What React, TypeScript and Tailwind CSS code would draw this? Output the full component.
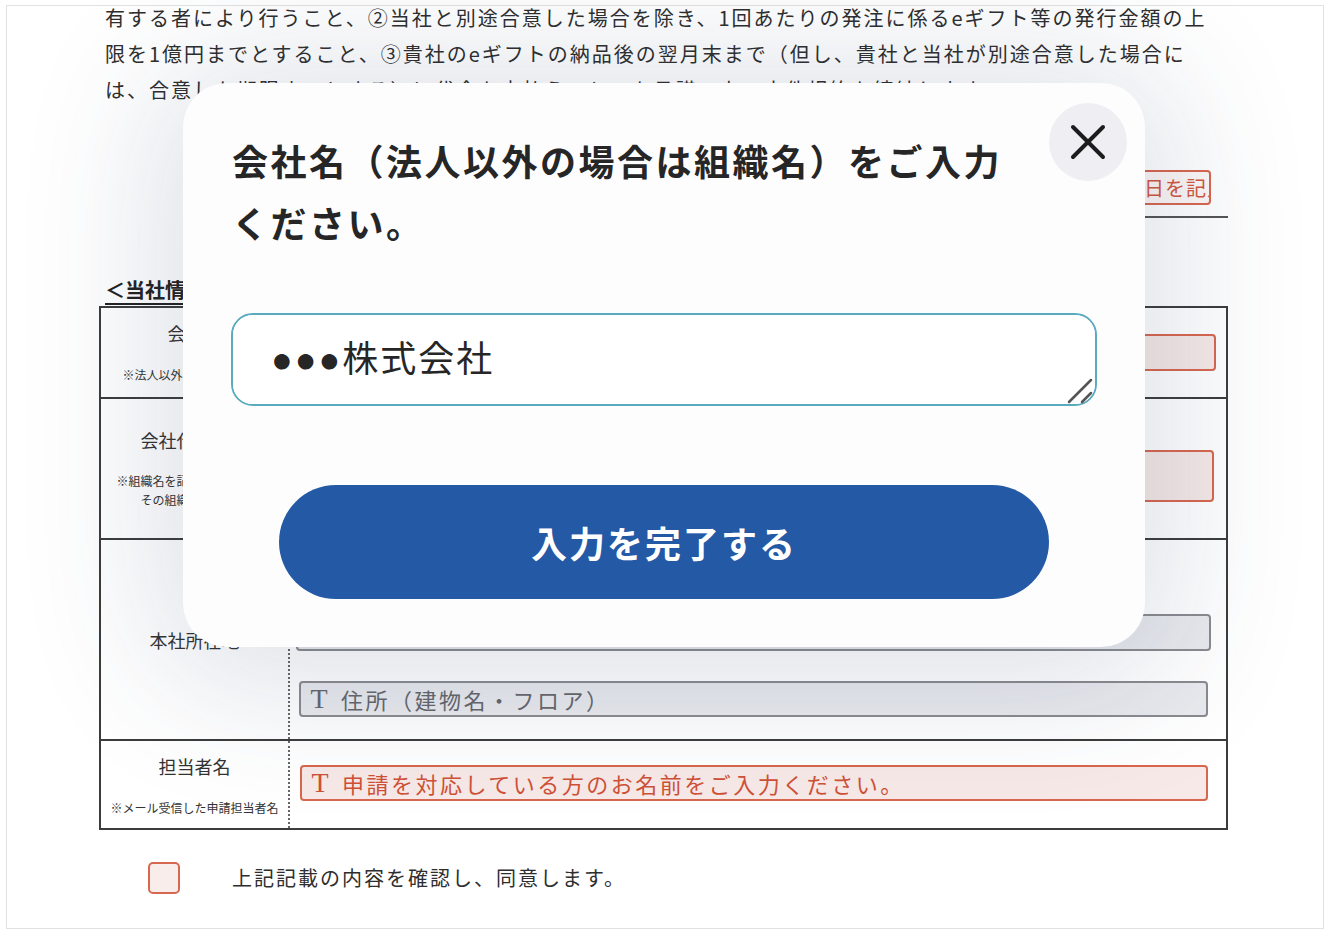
import { useState } from "react";

const jp = "font-['Noto_Sans_CJK_JP',sans-serif]";

function FieldBox({
  tone,
  text,
  className,
}: {
  tone: "red" | "gray";
  text?: string;
  className: string;
}) {
  const red = tone === "red";
  return (
    <div
      className={`flex items-center rounded-[4px] border-2 pl-[4px] ${
        red
          ? "border-[#d8674f] bg-[#f6e9e7] text-[#cf5136]"
          : "border-[#8a8b8f] bg-[#e9eaee] text-[#66676b]"
      } ${className}`}
    >
      {text && (
        <>
          <span className="w-[28px] text-center font-['Liberation_Serif',serif] text-[28px] leading-none">
            T
          </span>
          <span className="ml-[8px] text-[22px] leading-none tracking-[2.5px] whitespace-nowrap">
            {text}
          </span>
        </>
      )}
    </div>
  );
}

export default function App() {
  const [name, setName] = useState("●●●株式会社");

  return (
    <div className={`relative h-[948px] w-[1338px] overflow-hidden bg-white ${jp}`}>
      <div className="ml-[6px] mt-[5px] h-[924px] w-[1318px] border border-[#e2e2e2] pl-[92px] pr-[95px]">
        <div className="-mt-[6px] pl-[6px] text-[20px] leading-[36px] tracking-[2px] text-[#2e2e2e] whitespace-nowrap">
          <div>有する者により行うこと、②当社と別途合意した場合を除き、1回あたりの発注に係るeギフト等の発行金額の上</div>
          <div>限を1億円までとすること、③貴社のeギフトの納品後の翌月末まで（但し、貴社と当社が別途合意した場合に</div>
          <div>は、合意した期限までとする）に代金を支払うこと、を承諾の上、本件規約を締結します。</div>
        </div>

        <div className="mt-[62px] flex justify-end">
          <div className="flex w-[520px] items-center justify-end border-b-2 border-[#555] pb-[11px] pr-[17px]">
            <div className="h-[35px] w-[108px] overflow-hidden rounded-[4px] border-2 border-[#d8674f] bg-[#fdf7f6] pl-[18px] text-[20px] leading-[31px] tracking-[1px] text-[#d2573d] whitespace-nowrap">
              月日を記入
            </div>
          </div>
        </div>

        <div className="mt-[58px] pl-[6px] text-[20px] leading-[28px] font-bold text-[#222]">
          <span className="underline decoration-2 underline-offset-[5px]">＜当社情報＞</span>
        </div>

        <div className="mt-[2px] border-2 border-[#3c3c3c] text-[#333]">
          <div className="grid h-[89px] grid-cols-[189px_1fr]">
            <div className="flex flex-col items-center border-r-2 border-dotted border-[#666] pt-[14px]">
              <span className="text-[18px] leading-[22px]">会社名</span>
              <span className="mt-[23px] text-[12px] leading-[16px]">※法人以外の場合は組織名</span>
            </div>
            <div className="flex items-center pl-[8px] pr-[10px]">
              <FieldBox tone="red" text="会社名をご入力ください。" className="h-[37px] w-full" />
            </div>
          </div>

          <div className="grid h-[141px] grid-cols-[189px_1fr] border-t-2 border-[#3c3c3c]">
            <div className="flex flex-col items-center border-r-2 border-dotted border-[#666] pt-[30px] text-center">
              <span className="text-[18px] leading-[22px]">会社代表者名</span>
              <span className="mt-[20px] text-[12px] leading-[19px]">
                ※組織名を記入した場合は、
                <br />
                その組織の代表者名
              </span>
            </div>
            <div className="pl-[8px] pr-[12px] pt-[51px]">
              <FieldBox tone="red" text="代表者名をご入力ください。" className="h-[52px] w-full" />
            </div>
          </div>

          <div className="grid h-[201px] grid-cols-[189px_1fr] border-t-2 border-[#3c3c3c]">
            <div className="flex items-center justify-center border-r-2 border-dotted border-[#666]">
              <span className="text-[18px] leading-[22px]">本社所在地</span>
            </div>
            <div className="flex flex-col pl-[6px] pr-[15px] pt-[20px]">
              <FieldBox tone="gray" text="郵便番号" className="h-[36px] w-[240px]" />
              <FieldBox tone="gray" text="住所（都道府県・市区町村・番地）" className="mt-[18px] h-[37px] w-full" />
              <FieldBox tone="gray" text="住所（建物名・フロア）" className="ml-[3px] mt-[30px] h-[36px] w-[909px]" />
            </div>
          </div>

          <div className="grid h-[89px] grid-cols-[189px_1fr] border-t-2 border-[#3c3c3c]">
            <div className="flex flex-col items-center border-r-2 border-dotted border-[#666] pt-[14px]">
              <span className="text-[18px] leading-[22px]">担当者名</span>
              <span className="mt-[23px] text-[12px] leading-[16px] whitespace-nowrap">※メール受信した申請担当者名</span>
            </div>
            <div className="pl-[10px] pr-[18px] pt-[24px]">
              <FieldBox tone="red" text="申請を対応している方のお名前をご入力ください。" className="h-[36px] w-full" />
            </div>
          </div>
        </div>

        <div className="mt-[32px] flex items-center pl-[49px]">
          <span className="h-[32px] w-[32px] rounded-[5px] border-2 border-[#d8674f] bg-[#f8edeb]" />
          <span className="ml-[52px] text-[20px] tracking-[2px] text-[#2e2e2e]">
            上記記載の内容を確認し、同意します。
          </span>
        </div>
      </div>

      {/* modal */}
      <div className="absolute left-[183px] top-[83px] w-[962px] rounded-[44px] bg-[#fdfdfe] px-12 pb-12 pt-[46px] shadow-[0_10px_140px_25px_rgba(45,60,100,0.16)]">
        <button
          type="button"
          className="absolute right-[18px] top-[20px] flex h-[78px] w-[78px] items-center justify-center rounded-full bg-[#efeff3]"
        >
          <svg width="36" height="36" viewBox="0 0 36 36" fill="none" stroke="#1c1c1c" strokeWidth="4" strokeLinecap="round">
            <path d="M3 3 L33 33 M33 3 L3 33" />
          </svg>
        </button>

        <h2 className="w-[790px] pl-[1px] text-[36px] leading-[62px] font-bold tracking-[2.5px] text-[#262626]">
          会社名（法人以外の場合は組織名）をご入力ください。
        </h2>

        <div className="relative mt-[60px]">
          <textarea
            value={name}
            onChange={(e) => setName(e.target.value)}
            className="block h-[93px] w-full resize-none rounded-[22px] border-2 border-[#5aaabf] bg-white py-[19px] pl-[38px] pr-4 font-['Liberation_Sans','Noto_Sans_CJK_JP',sans-serif] text-[36px] leading-[52px] tracking-[2px] text-[#262626] outline-none"
          />
          <svg
            className="pointer-events-none absolute bottom-[2px] right-[4px]"
            width="26"
            height="26"
            viewBox="0 0 26 26"
            fill="none"
            stroke="#555"
            strokeWidth="2.5"
            strokeLinecap="round"
          >
            <path d="M2 24 L24 2 M15 24 L24 15" />
          </svg>
        </div>

        <button
          type="button"
          className="mx-auto mt-[79px] flex h-[114px] w-[770px] items-center justify-center rounded-full bg-[#2459a5] text-[36px] font-bold tracking-[2px] text-white"
        >
          入力を完了する
        </button>
      </div>
    </div>
  );
}
